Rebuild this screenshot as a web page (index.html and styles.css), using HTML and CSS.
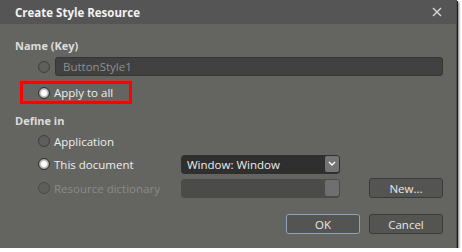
FILE: index.html
```html
<!DOCTYPE html>
<html>
  <head>
    <meta charset="UTF-8">
    <title>Create Style Resource</title>
    <link rel="stylesheet" href="styles.css">
  </head>
  <body>
    <div class="dialog">
      <div class="titlebar">
        <span class="title">Create Style Resource</span>
        <svg class="close" width="10" height="10" viewBox="0 0 10 10">
          <path d="M1 1 L9 9 M9 1 L1 9" stroke="#d8d8d8" stroke-width="1.4"/>
        </svg>
      </div>
      <div class="content">
        <div class="group-label">Name (Key)</div>
        <div class="row">
          <span class="radio"></span>
          <div class="textbox">ButtonStyle1</div>
        </div>
        <div class="row apply">
          <div class="highlight">
            <span class="radio checked"></span>
            <span class="label">Apply to all</span>
          </div>
        </div>

        <div class="group-label define">Define in</div>
        <div class="row short">
          <span class="radio"></span>
          <span class="label">Application</span>
        </div>
        <div class="row tall">
          <span class="radio checked"></span>
          <span class="label wide">This document</span>
          <div class="combo">
            <span>Window: Window</span>
            <span class="combo-btn">
              <svg width="8" height="6" viewBox="0 0 8 6"><path d="M1 1 L4 4 L7 1" stroke="#fff" stroke-width="1.4" fill="none"/></svg>
            </span>
          </div>
        </div>
        <div class="row tall disabled">
          <span class="radio"></span>
          <span class="label wide">Resource dictionary</span>
          <div class="combo off">
            <span></span>
            <span class="combo-btn"></span>
          </div>
          <button class="btn new">New...</button>
        </div>

        <div class="actions">
          <button class="btn ok">OK</button>
          <button class="btn">Cancel</button>
        </div>
      </div>
    </div>
  </body>
</html>
```

FILE: styles.css
```css
body {
  margin: 0;
  background: #fff;
  font-family: "Open Sans", "Noto Sans", sans-serif;
  font-size: 11px;
  color: #e6e6e6;
}

.dialog {
  width: 457px;
  height: 248px;
  background: #646561;
  box-shadow: 2px 2px 2px rgba(0, 0, 0, 0.55), 1px 1px 0 #3a3a3a;
  border-right: 1px solid #4c4c4a;
  box-sizing: border-box;
}

.titlebar {
  height: 24px;
  background: #555555;
  display: flex;
  align-items: center;
  justify-content: space-between;
  padding: 0 14px 0 15px;
}
.title {
  font-weight: bold;
  font-size: 11.5px;
  color: #f2f2f2;
}

.content {
  padding: 13px 13px 0 15px;
}

.group-label {
  font-weight: bold;
  color: #dcdcdc;
  height: 18px;
  line-height: 18px;
}
.define {
  margin-top: 8px;
}

.row {
  display: flex;
  align-items: center;
  height: 23px;
  padding-left: 23px;
}
.row.apply {
  margin-top: 3px;
}
.row.short {
  height: 22px;
}
.row.tall {
  height: 24px;
}

.radio {
  width: 10px;
  height: 10px;
  border: 1px solid #3e3e3e;
  border-radius: 50%;
  background: #5e5f5c;
  box-sizing: content-box;
  flex-shrink: 0;
  margin-right: 4px;
}
.radio.checked {
  background: radial-gradient(circle, #ffffff 0 2.5px, #c8c8c8 3.5px, #9a9a9a 5px);
  border-color: #2e2e2e;
}

.textbox {
  flex: 1;
  height: 19px;
  line-height: 18px;
  margin-left: 1px;
  background: #414141;
  border: 1px solid #353535;
  border-radius: 3px;
  box-sizing: border-box;
  padding-left: 7px;
  color: #8f8f8f;
  font-size: 11.5px;
}

.highlight {
  display: flex;
  align-items: center;
  border: 3px solid #ff0000;
  height: 23px;
  box-sizing: border-box;
  margin-left: -18px;
  padding-left: 15px;
  width: 112px;
}

.label {
  color: #eeeeee;
  font-size: 11.5px;
}
.label.wide {
  width: 127px;
}

.combo {
  width: 159px;
  height: 19px;
  background: #2f2f2f;
  border-radius: 4px;
  display: flex;
  align-items: center;
  justify-content: space-between;
  padding: 0 1px 0 6px;
  box-sizing: border-box;
  color: #eeeeee;
  font-size: 11.5px;
}
.combo-btn {
  width: 14px;
  height: 16px;
  background: #747375;
  border-radius: 2px;
  display: flex;
  align-items: center;
  justify-content: center;
}
.combo.off {
  background: #4b4c49;
}
.combo.off .combo-btn {
  background: #6f6e70;
}

.disabled .label {
  color: #8a8a8a;
}
.disabled .radio {
  border-color: #4a4a4a;
}

.btn {
  width: 74px;
  height: 20px;
  background: #545553;
  border: 1px solid #3a3a3a;
  border-radius: 3px;
  color: #e8e8e8;
  font-family: "Open Sans", "Noto Sans", sans-serif;
  font-size: 11.5px;
  padding: 0;
}
.btn.new {
  margin-left: auto;
}
.btn.ok {
  border-color: #8ba3bd;
}

.actions {
  display: flex;
  justify-content: flex-end;
  gap: 9px;
  margin-top: 14px;
}
```
